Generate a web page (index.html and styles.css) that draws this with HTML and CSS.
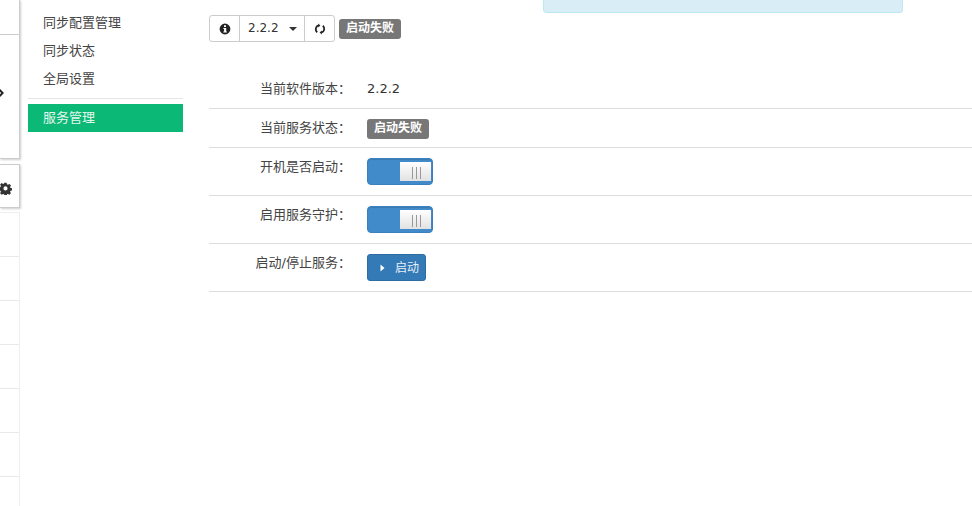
FILE: index.html
```html
<!DOCTYPE html>
<html lang="zh-CN">
<head>
<meta charset="utf-8">
<title>服务管理</title>
<link rel="stylesheet" href="styles.css">
</head>
<body>
<div class="page">
  <aside class="rail">
    <div class="rail-top">
      <div class="rail-cell rail-cell-a"></div>
      <div class="rail-cell rail-cell-b">
        <svg class="chev" viewBox="0 0 6 8" width="6" height="8"><path d="M1.4 0.8 L4.6 4 L1.4 7.2" fill="none" stroke="#222" stroke-width="2"/></svg>
      </div>
    </div>
    <div class="rail-gear">
      <svg class="gear" viewBox="0 0 14 14" width="13" height="13"><path fill="#333" fill-rule="evenodd" d="M5.7 0.6h2.6l.4 1.9 1.1.5 1.7-1 1.8 1.8-1 1.7.5 1.1 1.9.4v2.6l-1.9.4-.5 1.1 1 1.7-1.8 1.8-1.7-1-1.1.5-.4 1.9H5.7l-.4-1.9-1.1-.5-1.7 1-1.8-1.8 1-1.7-.5-1.1-1.9-.4V6l1.9-.4.5-1.1-1-1.7 1.8-1.8 1.7 1 1.1-.5z M7 4.8a2.4 2.4 0 1 0 0 4.8 2.4 2.4 0 0 0 0-4.8z" transform="translate(0.5 0.2) scale(0.93)"/></svg>
    </div>
    <div class="rail-rows">
      <div class="rail-row"></div>
      <div class="rail-row"></div>
      <div class="rail-row"></div>
      <div class="rail-row"></div>
      <div class="rail-row"></div>
      <div class="rail-row"></div>
      <div class="rail-row"></div>
    </div>
  </aside>
  <nav class="menu">
    <a class="menu-item">同步配置管理</a>
    <a class="menu-item">同步状态</a>
    <a class="menu-item">全局设置</a>
    <div class="menu-sep"></div>
    <a class="menu-item active">服务管理</a>
  </nav>
  <main class="content">
    <div class="alert-wrap"><div class="alert"></div></div>
    <div class="toolbar">
      <div class="btn-group">
        <span class="tb-btn tb-icon tb-first">
          <svg viewBox="0 0 12 12" width="12" height="12"><path fill="#222" fill-rule="evenodd" d="M6 .6a5.4 5.4 0 1 0 0 10.8A5.4 5.4 0 0 0 6 .6zM5 2.3h2v1.6H5zM4.4 5h2.8v3.4h.6v1H4.3v-1h.8V6h-.7z"/></svg>
        </span>
        <span class="tb-btn tb-ver">2.2.2<i class="caret"></i></span>
        <span class="tb-btn tb-icon">
          <svg viewBox="0 0 12 12" width="12" height="12"><path fill="none" stroke="#222" stroke-width="1.8" d="M3.2 9.2A4 4 0 0 1 4.6 2.3M8.8 2.8A4 4 0 0 1 7.4 9.7"/><path fill="#222" d="M4.2.4v4l2.2-2zM7.8 11.6v-4l-2.2 2z"/></svg>
        </span>
      </div>
      <span class="label">启动失败</span>
    </div>
    <dl class="rows">
      <div class="row row-a">
        <dt>当前软件版本：</dt>
        <dd class="value">2.2.2</dd>
      </div>
      <div class="row row-b">
        <dt>当前服务状态：</dt>
        <dd><span class="label">启动失败</span></dd>
      </div>
      <div class="row row-c">
        <dt>开机是否启动：</dt>
        <dd><span class="switch"><span class="knob"></span></span></dd>
      </div>
      <div class="row row-c">
        <dt>启用服务守护：</dt>
        <dd><span class="switch"><span class="knob"></span></span></dd>
      </div>
      <div class="row row-d">
        <dt>启动/停止服务：</dt>
        <dd><span class="start-btn"><svg viewBox="0 0 5 8" width="5" height="8"><path fill="#fff" d="M0.5 0.5 L4.5 4 L0.5 7.5z"/></svg><span class="start-text">启动</span></span></dd>
      </div>
    </dl>
  </main>
</div>
</body>
</html>
```

FILE: styles.css
```css
* { box-sizing: border-box; }
html, body { margin: 0; padding: 0; background: #fff; overflow: hidden; }
body {
  width: 972px;
  height: 506px;
  font-family: "DejaVu Sans", "Noto Sans CJK SC", sans-serif;
  font-size: 13px;
  color: #333;
}
.page { display: flex; height: 506px; }

.rail { width: 20px; flex: none; }
.rail-top {
  height: 159px;
  background: #fff;
  border-right: 1px solid #ccc;
  border-bottom: 1px solid #ccc;
  box-shadow: 1px 1px 2px rgba(0,0,0,.2);
}
.rail-cell-a { height: 35px; border-bottom: 1px solid #ccc; }
.rail-cell-b { height: 123px; display: flex; align-items: flex-start; padding-top: 54px; }
.chev { margin-left: -2px; }
.rail-gear {
  margin-top: 5px;
  height: 44px;
  background: #fff;
  border: 1px solid #ccc;
  border-left: 0;
  box-shadow: 1px 1px 2px rgba(0,0,0,.2);
  display: flex;
  align-items: center;
  padding-top: 4px;
}
.gear { margin-left: -1px; }
.rail-rows { margin-top: 4px; border-top: 1px solid #eee; border-right: 1px solid #eee; height: 294px; }
.rail-row { height: 44px; border-bottom: 1px solid #e8e8e8; }

.menu { width: 155px; margin-left: 8px; flex: none; display: flex; flex-direction: column; padding-top: 9px; }
.menu-item { height: 28px; line-height: 27px; padding-left: 15px; color: #444; }
.menu-sep { height: 1px; background: #e5e5e5; margin: 5px 0 5px; }
.menu-item.active { background: #0cb875; color: #e4f7ef; }

.content { flex: 1; min-width: 0; margin-left: 26px; }
.alert-wrap { height: 13px; padding-left: 334px; }
.alert {
  width: 360px;
  height: 13px;
  background: #d9edf7;
  border: 1px solid #bce8f1;
  border-top: 0;
  border-radius: 0 0 4px 4px;
}
.toolbar { display: flex; align-items: center; margin-top: 2px; height: 27px; gap: 4px; }
.btn-group {
  display: flex;
  height: 27px;
  border: 1px solid #ccc;
  border-radius: 3px;
  background: #fff;
}
.tb-btn { display: flex; align-items: center; justify-content: center; color: #333; }
.tb-btn + .tb-btn { border-left: 1px solid #ccc; }
.tb-icon { width: 30px; }
.tb-first { width: 29px; }
.tb-ver { width: 65px; justify-content: flex-start; padding: 0 0 2px 8px; font-size: 12px; }
.caret {
  display: inline-block;
  margin: 3px 0 0 10px;
  border-top: 4px solid #333;
  border-left: 4px solid transparent;
  border-right: 4px solid transparent;
}
.label {
  display: inline-block;
  height: 20px;
  line-height: 19px;
  width: 62px;
  text-align: center;
  background: #777;
  border-radius: 3px;
  color: #fff;
  font-weight: 700;
  font-size: 12px;
}

.rows { margin: 0; margin-top: 22px; }
.row { display: flex; border-bottom: 1px solid #ddd; }
.row dt { width: 142px; margin-top: -2px; text-align: right; flex: none; color: #444; }
.row dd { margin: 0 0 0 16px; }
.row-a { height: 45px; padding-top: 16px; }
.row-b { height: 39px; padding-top: 10px; }
.row-c { height: 48px; padding-top: 10px; }
.row-d { height: 48px; padding-top: 10px; }
.row dd.value { margin-top: 1px; font-size: 13px; }

.switch {
  display: block;
  width: 66px;
  height: 27px;
  background: #428bca;
  border: 1px solid #3a80bd;
  border-radius: 4px;
  padding: 3px 0 3px 32px;
  box-shadow: inset 0 1px 1px rgba(0,0,0,.12);
}
.knob {
  display: block;
  width: 31px;
  height: 19px;
  background: linear-gradient(#fff, #e2e2e2);
  position: relative;
}
.knob::after {
  content: "";
  position: absolute;
  left: 12px;
  top: 5px;
  width: 7px;
  height: 12px;
  border-left: 1px solid #999;
  border-right: 1px solid #999;
  background: linear-gradient(#999, #999) center / 1px 100% no-repeat;
}
.start-btn {
  display: flex;
  align-items: center;
  width: 59px;
  height: 27px;
  background: #337ab7;
  border: 1px solid #2e6da4;
  border-radius: 3px;
  color: #e8f0f7;
  font-size: 12px;
  padding-left: 12px;
  gap: 10px;
}
.start-text { margin-top: -2px; }
```
